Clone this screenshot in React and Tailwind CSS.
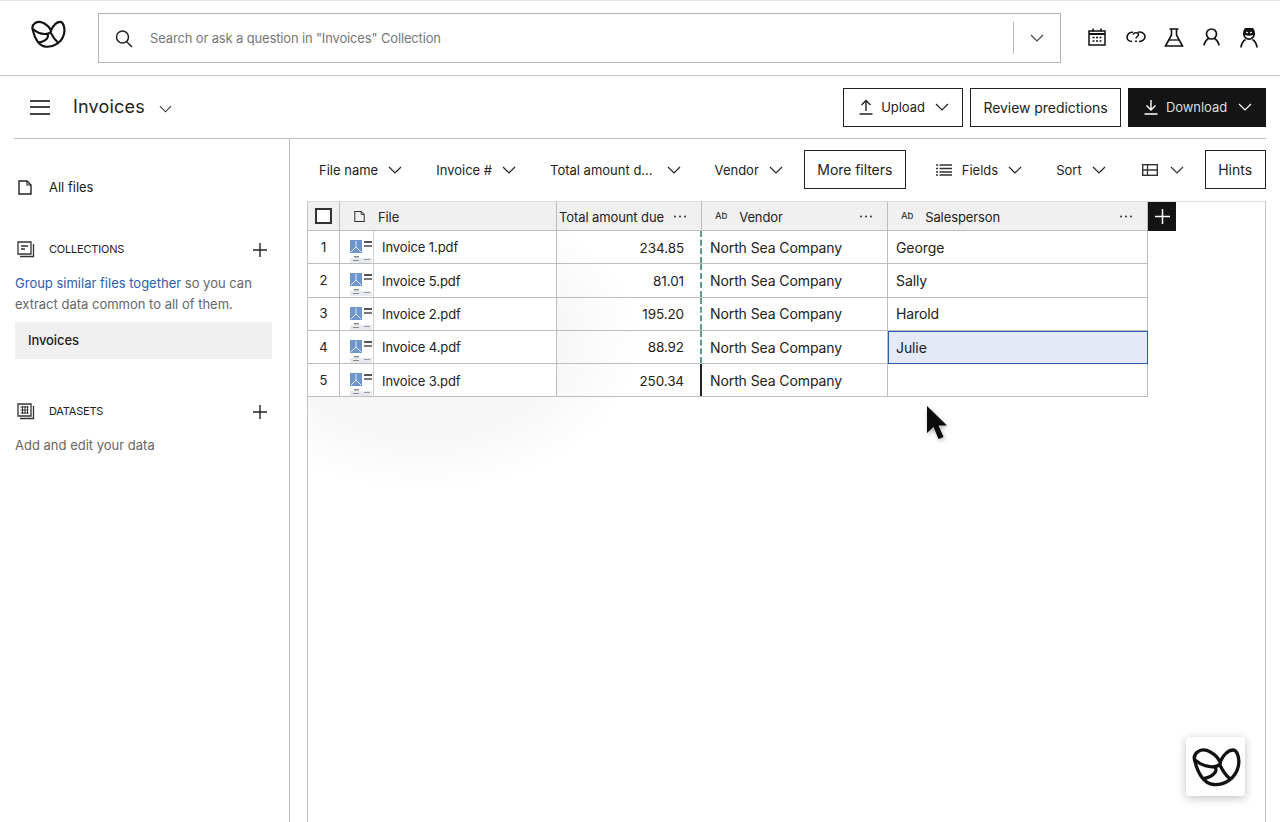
import React from "react";

const font = { fontFamily: '"Inter", "Liberation Sans", sans-serif' };

function Chevron({ className = "text-[#222]", w = 14 }) {
    return (
        <svg width={w} height="8" viewBox="0 0 14 8" fill="none" className={className}>
            <path d="M1 1l6 6 6-6" stroke="currentColor" strokeWidth="1.2" />
        </svg>
    );
}

function Logo({ size = 36, stroke = 9 }) {
    return (
        <svg width={size} height={size * 0.83} viewBox="60 60 150 125" fill="none">
            <path
                d="M72 108C62 82 90 62 118 78C132 86 142 96 147 108C155 92 170 72 186 72C200 72 207 100 202 122C194 158 160 178 128 176C98 174 80 140 72 108Z"
                stroke="#111" strokeWidth={stroke} strokeLinejoin="round"
            />
            <path d="M72 102C92 120 116 124 130 122C146 120 150 112 147 108" stroke="#111" strokeWidth={stroke} />
            <path d="M130 122C142 130 132 152 98 158" stroke="#111" strokeWidth={stroke} />
            <path d="M147 118C156 136 164 148 176 158" stroke="#111" strokeWidth={stroke} />
        </svg>
    );
}

function FileIcon({ className = "" }) {
    return (
        <svg width="14" height="15" viewBox="0 0 14 15" fill="none" className={className}>
            <path d="M1 1h8l4 4v9H1z" stroke="#222" strokeWidth="1.4" />
            <path d="M9 1v4h4" stroke="#222" strokeWidth="1.1" />
        </svg>
    );
}

function StackIcon({ grid }) {
    return (
        <svg width="18" height="18" viewBox="0 0 18 18" fill="none">
            <path d="M1 1h13v12H1z" stroke="#333" strokeWidth="1.3" />
            <path d="M16.5 3v12.500H3" stroke="#333" strokeWidth="1.3" />
            {grid ? (
                <path d="M3.500 4h8M3.500 7h8M3.500 10h8M5.500 3v8M8 3v8M10.500 3v8" stroke="#333" strokeWidth="1" />
            ) : (
                <path d="M4 5h7M4 8h4" stroke="#333" strokeWidth="1.3" />
            )}
        </svg>
    );
}

function Plus({ size = 14, color = "#222" }) {
    return (
        <svg width={size} height={size} viewBox="0 0 14 14" fill="none">
            <path d="M7 0v14M0 7h14" stroke={color} strokeWidth="1.4" />
        </svg>
    );
}

function Dots() {
    return (
        <svg width="14" height="3" viewBox="0 0 14 3" fill="#333">
            <circle cx="2" cy="1.500" r="1" />
            <circle cx="7" cy="1.500" r="1" />
            <circle cx="12" cy="1.500" r="1" />
        </svg>
    );
}

function Thumb() {
    return (
        <svg width="24" height="32" viewBox="0 0 24 32" fill="none" className="block">
            <rect x="1" y="9" width="12" height="13" fill="#6e96cc" />
            <path d="M7 10v6l-5 5M7 16l5 5" stroke="#fff" strokeWidth="0.8" />
            <rect x="15" y="10" width="8" height="2" fill="#555" />
            <rect x="15" y="14" width="8" height="2" fill="#777" />
            <rect x="1" y="27" width="22" height="5" fill="#e6eaef" />
            <rect x="5" y="25" width="5" height="1.500" fill="#888" />
            <rect x="15" y="28" width="6" height="1" fill="#999" />
            <rect x="4" y="29" width="6" height="1" fill="#888" />
        </svg>
    );
}

function FilterItem({ label, className = "", gap = "gap-[10px]" }) {
    return (
        <div className={`flex items-center text-[13px] text-[#222] ${gap} ${className}`}>
            <span className="mt-[2px]">{label}</span>
            <Chevron />
        </div>
    );
}

const rows = [
    { n: 1, file: "Invoice 1.pdf", total: "234.85", name: "George" },
    { n: 2, file: "Invoice 5.pdf", total: "81.01", name: "Sally" },
    { n: 3, file: "Invoice 2.pdf", total: "195.20", name: "Harold" },
    { n: 4, file: "Invoice 4.pdf", total: "88.92", name: "Julie", selected: true },
    { n: 5, file: "Invoice 3.pdf", total: "250.34", name: "" },
];

function Row({ row }) {
    const last = row.n === 5;
    return (
        <div className="grid h-[33.3px] grid-cols-[32px_217px_145px_186px_260px] text-[14px] tracking-[-0.1px] text-[#222]">
            <div className="flex items-center justify-center border-r border-b border-[#bdbdbd] bg-white pt-[1px] text-[13px]">{row.n}</div>
            <div className="flex items-center border-r border-b border-[#bdbdbd] bg-white">
                <div className="flex h-full w-[34px] shrink-0 items-center justify-end overflow-hidden border-r border-[#cfcfcf]">
                    <Thumb />
                </div>
                <span className="ml-2 mt-[2px] text-[13px]">{row.file}</span>
            </div>
            <div className="flex items-center border-b border-[#bdbdbd] text-[13.500px]">
                <span className="mt-[1px] flex-1 pr-[16px] text-right">{row.total}</span>
                <span className={`h-full w-[2px] ${last ? "bg-[#222]" : "border-l-2 border-dashed border-[#5f9a8f]"}`} />
            </div>
            <div className="flex items-center border-r border-b border-[#bdbdbd] bg-white pl-2">North Sea Company</div>
            <div className={`flex items-center ${row.selected ? "border border-[#2a5db0] bg-[#e3e9f6] pl-[7px]" : "border-r border-b border-[#bdbdbd] bg-white pl-2"}`}>
                {row.name}
            </div>
        </div>
    );
}

export default function App() {
    return (
        <div className="relative h-[822px] w-[1280px] overflow-hidden bg-white" style={font}>
            {/* Top bar */}
            <header className="flex h-[76px] items-start border-t border-b border-t-[#e2e2e2] border-b-[#c4c4c4]">
                <div className="ml-[30px] mt-[18px] w-[68px] shrink-0">
                    <Logo />
                </div>
                <div className="mt-[12px] flex h-[50px] w-[963px] items-center border border-[#b5b5b5]">
                    <svg width="20" height="20" viewBox="0 0 20 20" fill="none" className="ml-[15px] mt-[1px]">
                        <circle cx="8.500" cy="8" r="6" stroke="#222" strokeWidth="1.500" />
                        <path d="M12.500 12.500l5.500 5.500" stroke="#222" strokeWidth="1.500" />
                    </svg>
                    <span className="ml-[16px] mt-[2px] flex-1 text-[13px] tracking-[-0.15px] text-[#777]">Search or ask a question in "Invoices" Collection</span>
                    <div className="h-[32px] w-px bg-[#bbb]" />
                    <div className="flex w-[46px] justify-center">
                        <Chevron className="text-[#444]" />
                    </div>
                </div>
                <div className="ml-[27px] mt-[11px] flex h-[50px] items-center">
                    <svg width="18" height="18" viewBox="0 0 18 18" fill="none">
                        <rect x="1" y="3" width="16" height="14" stroke="#111" strokeWidth="1.500" />
                        <path d="M1 6h16" stroke="#111" strokeWidth="2" />
                        <path d="M5 0.500v3M13 0.500v3" stroke="#111" strokeWidth="1.500" />
                        <path d="M4.500 9.500h2M8 9.500h2M11.500 9.500h2M4.500 13h2M8 13h2M11.500 13h2" stroke="#111" strokeWidth="1.500" />
                    </svg>
                    <svg width="20" height="12" viewBox="0 0 20 12" fill="none" className="ml-[20px]">
                        <path d="M6 10.500C3 10.500 1 8.500 1 6.300 1 3 4 1 7 1.200M12 1.200C16 0.500 19 3 19 5.500 19 8.500 16 10.500 13 10.500" stroke="#111" strokeWidth="1.600" />
                        <path d="M7 3.500C8 1 12.500 1 12.500 3.800 12.500 5.500 10 5.500 10 7.500" stroke="#111" strokeWidth="1.500" />
                        <circle cx="10" cy="10.300" r="1" fill="#111" />
                    </svg>
                    <svg width="20" height="19" viewBox="0 0 20 19" fill="none" className="ml-[18px]">
                        <path d="M5.500 1h9M7.500 1v6L1.500 18h17L12.500 7V1" stroke="#111" strokeWidth="1.600" />
                        <path d="M5 12h10" stroke="#111" strokeWidth="1.300" />
                    </svg>
                    <svg width="17" height="18" viewBox="0 0 17 18" fill="none" className="ml-[19px]">
                        <circle cx="8.500" cy="6" r="5" stroke="#111" strokeWidth="1.700" />
                        <path d="M5.500 10.500C3 12 1.500 14 1 17.500M11.500 10.500C14 12 15.500 14 16 17.500" stroke="#111" strokeWidth="1.700" />
                    </svg>
                    <svg width="18" height="21" viewBox="0 0 18 21" fill="none" className="ml-[20px]">
                        <circle cx="9" cy="7" r="5.200" stroke="#111" strokeWidth="1.700" />
                        <path d="M3.500 3.500L5 1h8l1.500 2.500V7.500c-2 1.500-9 1.500-11 0z" fill="#111" />
                        <path d="M6 5l2 1M12 5l-2 1" stroke="#fff" strokeWidth="1.100" />
                        <path d="M5.500 12.500C3 14 1.500 16 1 20.500M12.500 12.500C15 14 16.500 16 17 20.500" stroke="#111" strokeWidth="1.700" />
                    </svg>
                </div>
            </header>

            {/* Collection title bar */}
            <div className="mx-[14px] flex h-[63px] items-center border-b border-[#bdbdbd]">
                <div className="ml-[16px] flex h-[15px] w-[20px] flex-col justify-between">
                    <span className="block h-[2px] bg-[#444]" />
                    <span className="block h-[2px] bg-[#444]" />
                    <span className="block h-[2px] bg-[#444]" />
                </div>
                <span className="mb-[2px] ml-[23px] text-[18px] tracking-[0.2px] text-[#222]">Invoices</span>
                <Chevron className="ml-[14px] mt-[4px] text-[#333]" w={13} />
                <div className="ml-auto flex items-center gap-[7px] text-[14px] tracking-[-0.05px] text-[#222]">
                    <button className="flex h-[39px] w-[120px] items-center justify-center border border-[#222] pl-[2px]">
                        <svg width="14" height="16" viewBox="0 0 14 16" fill="none">
                            <path d="M7 12V1.500M2.500 6L7 1.500 11.500 6M0.500 15h13" stroke="#222" strokeWidth="1.400" />
                        </svg>
                        <span className="ml-[8px] mt-[2px] text-[13px]">Upload</span>
                        <Chevron className="ml-[10px] text-[#222]" />
                    </button>
                    <button className="h-[39px] w-[151px] border border-[#222] pt-[1px]">Review predictions</button>
                    <button className="flex h-[39px] w-[138px] items-center justify-center bg-[#141414] pl-[2px] text-white">
                        <svg width="14" height="16" viewBox="0 0 14 16" fill="none">
                            <path d="M7 1v10M2.500 6.500L7 11l4.500-4.500M0.500 15h13" stroke="#fff" strokeWidth="1.400" />
                        </svg>
                        <span className="ml-[8px] mt-[2px] text-[13px] text-[#ddd]">Download</span>
                        <Chevron className="ml-[11px] text-white" />
                    </button>
                </div>
            </div>

            <div className="flex h-[683px]">
                {/* Sidebar */}
                <aside className="h-full w-[290px] shrink-0 border-r border-[#bdbdbd] pl-[15px] text-[13px]">
                    <div className="mt-[39px] flex items-center">
                        <FileIcon className="ml-[3px]" />
                        <span className="ml-[17px] text-[#222]">All files</span>
                    </div>
                    <div className="mt-[43px] flex w-[252px] items-center">
                        <div className="ml-[2px] w-[32px]"><StackIcon /></div>
                        <span className="text-[11px] tracking-[-0.2px] text-[#222]">COLLECTIONS</span>
                        <div className="ml-auto"><Plus /></div>
                    </div>
                    <p className="mt-[14px] w-[250px] leading-[21px] text-[#666]">
                        <span className="text-[#2a5db0]">Group similar files together</span> so you can extract data common to all of them.
                    </p>
                    <div className="mt-[7px] flex h-[37px] w-[257px] items-center bg-[#f0f0f0] pl-[13px] pt-[2px] font-medium tracking-[-0.1px] text-[#222]">Invoices</div>
                    <div className="mt-[44px] flex w-[252px] items-center">
                        <div className="ml-[2px] w-[32px]"><StackIcon grid /></div>
                        <span className="text-[11px] tracking-[-0.2px] text-[#222]">DATASETS</span>
                        <div className="ml-auto"><Plus /></div>
                    </div>
                    <p className="mt-[15px] text-[#666]">Add and edit your data</p>
                </aside>

                {/* Main */}
                <main className="min-w-0 flex-1">
                    <div className="flex h-[62px] items-start pt-[11px]">
                        <div className="flex h-[39px] items-center pl-[29px]">
                            <FilterItem label="File name" />
                            <FilterItem label="Invoice #" className="ml-[34px]" />
                            <FilterItem label="Total amount d..." className="ml-[34px]" gap="gap-[14px]" />
                            <FilterItem label="Vendor" className="ml-[34px]" />
                        </div>
                        <button className="ml-[21px] h-[39px] w-[102px] border border-[#222] text-[14px] tracking-[-0.05px] text-[#222]">More filters</button>
                        <div className="ml-[30px] flex h-[39px] items-center">
                            <svg width="16" height="12" viewBox="0 0 16 12" fill="none">
                                <path d="M3.500 1H16M3.500 4.500H16M3.500 8H16M3.500 11H16M0 1h2M0 4.500h2M0 8h2M0 11h2" stroke="#333" strokeWidth="1.300" />
                            </svg>
                            <FilterItem label="Fields" className="ml-[10px]" />
                            <FilterItem label="Sort" className="ml-[34px]" />
                            <svg width="16" height="12" viewBox="0 0 16 12" fill="none" className="ml-[36px]">
                                <rect x="0.700" y="0.700" width="14.600" height="10.600" stroke="#333" strokeWidth="1.400" />
                                <path d="M0.700 6h14.600M5.500 0.700v10.600" stroke="#333" strokeWidth="1.300" />
                            </svg>
                            <Chevron className="ml-[12px] text-[#333]" />
                        </div>
                        <button className="ml-[21px] h-[39px] w-[61px] border border-[#222] text-[14px] text-[#222]">Hints</button>
                    </div>

                    {/* Table frame */}
                    <div className="relative ml-[17px] h-[621px] w-[959px] overflow-hidden border-t border-r border-l border-[#c4c4c4] border-t-[#dcdcdc]">
                        <div className="absolute left-[-98px] top-[-11px] h-[300px] w-[430px] rounded-full bg-[radial-gradient(closest-side,#f6f6f6_60%,#ffffff00)]" />
                        <div className="relative flex items-start">
                            <div>
                                <div className="grid h-[29px] grid-cols-[32px_217px_145px_186px_260px] border-b border-[#bdbdbd] bg-[#f0f0f0] text-[13px] tracking-[-0.1px] text-[#222]">
                                    <div className="flex items-center justify-center border-r border-[#bdbdbd]">
                                        <span className="block h-[16px] w-[17px] border-2 border-[#333] bg-white" />
                                    </div>
                                    <div className="flex items-center border-r border-[#bdbdbd] pl-[14px]">
                                        <svg width="11" height="13" viewBox="0 0 14 15" fill="none">
                                            <path d="M1 1h8l4 4v9H1z" stroke="#333" strokeWidth="1.300" />
                                            <path d="M9 1v4h4" stroke="#333" strokeWidth="1" />
                                        </svg>
                                        <span className="ml-[13px] mt-[3px]">File</span>
                                    </div>
                                    <div className="flex items-center border-r border-[#bdbdbd] pl-[2px]">
                                        <span className="mt-[3px]">Total amount due</span>
                                        <div className="ml-[9px]"><Dots /></div>
                                    </div>
                                    <div className="flex items-center border-r border-[#bdbdbd] pl-[13px]">
                                        <span className="text-[9.500px]">Ab</span>
                                        <span className="ml-[12px] mt-[3px]">Vendor</span>
                                        <div className="ml-auto mr-[14px]"><Dots /></div>
                                    </div>
                                    <div className="flex items-center border-r border-[#bdbdbd] pl-[13px]">
                                        <span className="text-[9.500px]">Ab</span>
                                        <span className="ml-[12px] mt-[3px]">Salesperson</span>
                                        <div className="ml-auto mr-[14px]"><Dots /></div>
                                    </div>
                                </div>
                                {rows.map((row) => (
                                    <Row key={row.n} row={row} />
                                ))}
                            </div>
                            <div className="flex h-[29px] w-[28px] items-center justify-center bg-[#141414]">
                                <Plus color="#fff" size={15} />
                            </div>
                        </div>
                    </div>
                </main>
            </div>

            {/* Mouse pointer */}
            <svg width="24" height="38" viewBox="0 0 24 38" className="absolute left-[925px] top-[405px]" style={{ filter: "drop-shadow(1px 2px 2px rgba(0,0,0,0.3))" }}>
                <path d="M2 1v27l6.500-6 5 12 5-2-5-11.500h8.500z" fill="#0b0b0b" />
            </svg>

            {/* Floating assistant */}
            <div className="absolute left-[1186px] top-[737px] flex h-[59px] w-[59px] items-center justify-center rounded-[3px] bg-white shadow-[0_2px_10px_rgba(0,0,0,0.25)]">
                <Logo size={50} stroke={10} />
            </div>
        </div>
    );
}
